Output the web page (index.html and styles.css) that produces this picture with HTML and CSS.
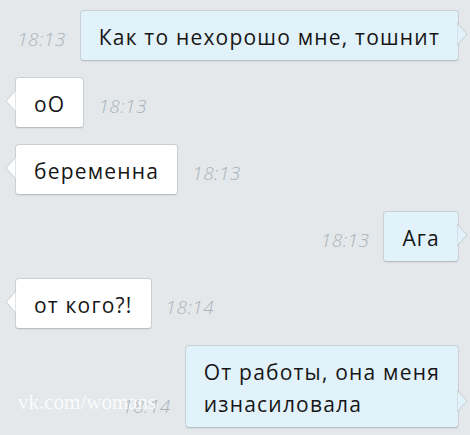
FILE: index.html
```html
<!DOCTYPE html>
<html lang="ru">
<head>
    <meta charset="UTF-8">
    <title>Диалог</title>
    <link rel="stylesheet" href="styles.css">
</head>
<body>
    <div class="chat">
        <div class="row out">
            <span class="time">18:13</span>
            <div class="bubble">Как то нехорошо мне, тошнит
                <svg class="tail" width="11" height="24" viewBox="0 0 11 24"><polygon points="0,1 10,12 0,23" /></svg>
            </div>
        </div>
        <div class="row in">
            <div class="bubble">oO
                <svg class="tail" width="11" height="24" viewBox="0 0 11 24"><polygon points="11,1 1,12 11,23" /></svg>
            </div>
            <span class="time">18:13</span>
        </div>
        <div class="row in">
            <div class="bubble">беременна
                <svg class="tail" width="11" height="24" viewBox="0 0 11 24"><polygon points="11,1 1,12 11,23" /></svg>
            </div>
            <span class="time">18:13</span>
        </div>
        <div class="row out">
            <span class="time">18:13</span>
            <div class="bubble">Ага
                <svg class="tail" width="11" height="24" viewBox="0 0 11 24"><polygon points="0,1 10,12 0,23" /></svg>
            </div>
        </div>
        <div class="row in">
            <div class="bubble">от кого?!
                <svg class="tail" width="11" height="24" viewBox="0 0 11 24"><polygon points="11,1 1,12 11,23" /></svg>
            </div>
            <span class="time">18:14</span>
        </div>
        <div class="row out">
            <span class="time">18:14</span>
            <div class="bubble">От работы, она меня<br>изнасиловала
                <svg class="tail" width="11" height="24" viewBox="0 0 11 24"><polygon points="0,1 10,12 0,23" /></svg>
            </div>
        </div>
        <div class="watermark">vk.com/womans</div>
    </div>
</body>
</html>
```

FILE: styles.css
```css
body {
    margin: 0;
    background: #e4e8eb;
    font-family: "Open Sans", "Noto Sans", sans-serif;
}
.chat {
    position: relative;
    display: flex;
    flex-direction: column;
    gap: 16px;
    padding: 10px 11px 0 15px;
    height: 425px;
}
.row {
    display: flex;
    align-items: flex-end;
    gap: 14px;
}
.row.out {
    justify-content: flex-end;
}
.bubble {
    position: relative;
    padding: 10px 18px 7px 18px;
    font-size: 21px;
    line-height: 32px;
    letter-spacing: 1.2px;
    color: #161616;
    background: #fff;
    border: 1px solid #c9d0d5;
    border-bottom-color: #b8c0c6;
    border-radius: 4px;
    box-shadow: 0 1px 1px rgba(0,0,0,0.06);
}
.out .bubble {
    background: #e2f2fa;
}
.time {
    font-size: 19px;
    font-style: italic;
    font-weight: 300;
    letter-spacing: 0.5px;
    line-height: 20px;
    color: #aab2b8;
    padding-bottom: 12px;
}
.tail {
    position: absolute;
    bottom: 14px;
}
.tail polygon {
    fill: #fff;
    stroke: #c6cdd2;
    stroke-width: 1;
}
.out .tail {
    right: -10px;
}
.out .tail polygon {
    fill: #e2f2fa;
}
.in .tail {
    left: -11px;
}
.watermark {
    position: absolute;
    left: 18px;
    top: 390px;
    font-family: "Liberation Serif", serif;
    font-size: 21px;
    color: rgba(255,255,255,0.85);
}
```
